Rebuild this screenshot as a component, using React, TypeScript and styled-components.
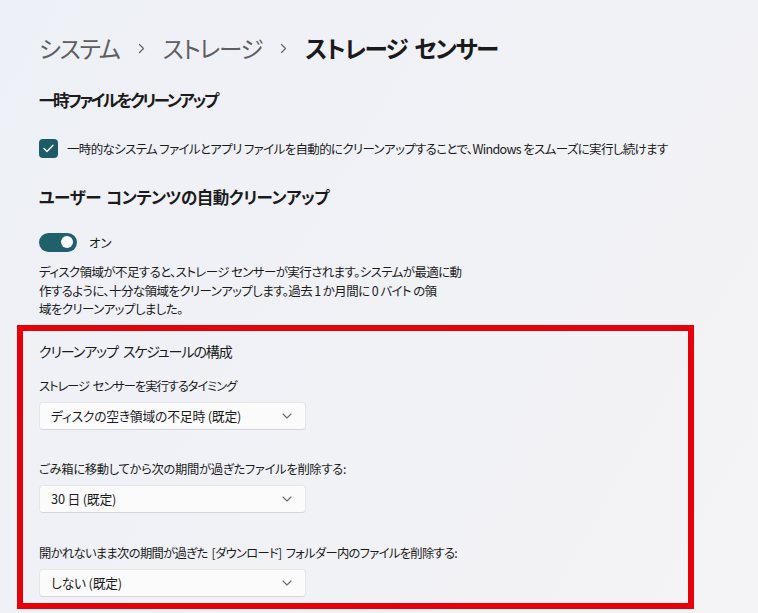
import * as React from 'react';
import styled, { createGlobalStyle } from 'styled-components';

const GlobalStyle = createGlobalStyle`
  html, body {
    margin: 0;
    padding: 0;
  }

  body {
    background: linear-gradient(120deg, #edf0f6 0%, #f1f2f6 55%, #f4f3f5 100%);
    font-family: "Noto Sans CJK JP", "Noto Sans", "Liberation Sans", sans-serif;
    font-feature-settings: "palt";
    color: #1b1b1b;
    min-height: 613px;
  }
`;

const Page = styled.div`
  width: 758px;
  height: 613px;
  box-sizing: border-box;
  padding: 30px 0 0 17px;
  overflow: hidden;
`;

const Section = styled.div`
  padding-left: 22px;
`;

const Breadcrumb = styled.div`
  display: flex;
  align-items: center;
  height: 36px;
  font-size: 23.5px;
  line-height: 36px;
  gap: 18px;
`;

const Crumb = styled.span<{ $current?: boolean }>`
  color: ${p => (p.$current ? '#1a1a1a' : '#5f5f5f')};
  font-weight: ${p => (p.$current ? 600 : 400)};
  letter-spacing: ${p => (p.$current ? '-1.4px' : '-1.2px')};
  word-spacing: 3px;
  white-space: nowrap;
`;

const Heading = styled.h2<{ $top: number; $spacing: number }>`
  margin: ${p => p.$top}px 0 0;
  font-size: 16.5px;
  line-height: 26px;
  font-weight: 600;
  letter-spacing: ${p => p.$spacing}px;
  word-spacing: 2px;
  white-space: nowrap;
`;

const CheckRow = styled.label`
  display: flex;
  align-items: center;
  gap: 9px;
  margin-top: 25px;
  height: 20px;
  font-size: 12.5px;
  letter-spacing: -0.65px;
  white-space: nowrap;
`;

const CheckBox = styled.span`
  width: 19px;
  height: 19px;
  border-radius: 4px;
  background: #1d5c67;
  display: flex;
  align-items: center;
  justify-content: center;
  flex: none;
`;

const ToggleRow = styled.div`
  display: flex;
  align-items: center;
  gap: 12px;
  margin-top: 22px;
  height: 20px;
  font-size: 12.5px;
`;

const Toggle = styled.span`
  width: 38px;
  height: 19px;
  border-radius: 10px;
  background: #1f606b;
  display: flex;
  align-items: center;
  justify-content: flex-end;
  padding-right: 4px;
  box-sizing: border-box;
  flex: none;
`;

const Knob = styled.span`
  width: 12px;
  height: 12px;
  border-radius: 50%;
  background: #ffffff;
`;

const Description = styled.p`
  margin: 11px 0 0;
  font-size: 12.5px;
  line-height: 18.5px;
  letter-spacing: -0.6px;
  white-space: nowrap;
`;

const ScheduleBox = styled.div`
  margin-top: 6px;
  width: 677px;
  height: 284px;
  box-sizing: border-box;
  border: 6px solid #e5000a;
  padding: 9px 16px 0 16px;
`;

const BoxTitle = styled.h3`
  margin: 0;
  font-size: 14px;
  line-height: 22px;
  font-weight: 400;
  letter-spacing: -1.1px;
  word-spacing: 3px;
  white-space: nowrap;
`;

const FieldLabel = styled.div<{ $top: number; $spacing: number }>`
  margin-top: ${p => p.$top}px;
  font-size: 12.3px;
  line-height: 18px;
  letter-spacing: ${p => p.$spacing}px;
  word-spacing: 2px;
  white-space: nowrap;
`;

const Select = styled.div`
  margin-top: 7px;
  width: 267px;
  height: 28px;
  box-sizing: border-box;
  display: flex;
  align-items: center;
  justify-content: space-between;
  padding: 0 13px 0 11px;
  background: #fbfbfc;
  border: 1px solid #e6e6e9;
  border-bottom-color: #d6d6da;
  border-radius: 4px;
  font-size: 12.8px;
  letter-spacing: -0.2px;
  color: #1b1b1b;
`;

const Chevron = ({ down }: { down?: boolean }) =>
  down ? (
    <svg width="10" height="6" viewBox="0 0 10 6">
      <path d="M1 1 L5 5 L9 1" fill="none" stroke="#6d6d6d" strokeWidth="1.1" strokeLinecap="round" strokeLinejoin="round" />
    </svg>
  ) : (
    <svg width="7" height="11" viewBox="0 0 7 11">
      <path d="M1.5 1.5 L5.5 5.5 L1.5 9.5" fill="none" stroke="#6a6a6a" strokeWidth="1.3" strokeLinecap="round" strokeLinejoin="round" />
    </svg>
  );

const Check = () => (
  <svg width="11" height="9" viewBox="0 0 11 9">
    <path d="M1 4.6 L4 7.4 L10 1.3" fill="none" stroke="#ffffff" strokeWidth="1.4" strokeLinecap="round" strokeLinejoin="round" />
  </svg>
);

const fields = [
  { label: 'ストレージ センサーを実行するタイミング', value: 'ディスクの空き領域の不足時 (既定)', top: 15, spacing: -1.05 },
  { label: 'ごみ箱に移動してから次の期間が過ぎたファイルを削除する:', value: '30 日 (既定)', top: 30, spacing: -0.3 },
  { label: '開かれないまま次の期間が過ぎた [ダウンロード] フォルダー内のファイルを削除する:', value: 'しない (既定)', top: 31, spacing: -0.68 },
];

export default function App() {
  return (
    <>
      <GlobalStyle />
      <Page>
        <Section>
          <Breadcrumb>
            <Crumb>システム</Crumb>
            <Chevron />
            <Crumb>ストレージ</Crumb>
            <Chevron />
            <Crumb $current>ストレージ センサー</Crumb>
          </Breadcrumb>
          <Heading $top={21} $spacing={-2.4}>一時ファイルをクリーンアップ</Heading>
          <CheckRow>
            <CheckBox>
              <Check />
            </CheckBox>
            一時的なシステム ファイルとアプリ ファイルを自動的にクリーンアップすることで、Windows をスムーズに実行し続けます
          </CheckRow>
          <Heading $top={26} $spacing={-0.5}>ユーザー コンテンツの自動クリーンアップ</Heading>
          <ToggleRow>
            <Toggle>
              <Knob />
            </Toggle>
            オン
          </ToggleRow>
          <Description>
            ディスク領域が不足すると、ストレージ センサーが実行されます。システムが最適に動
            <br />
            作するように、十分な領域をクリーンアップします。過去 1 か月間に 0 バイト の領
            <br />
            域をクリーンアップしました。
          </Description>
        </Section>
        <ScheduleBox>
          <BoxTitle>クリーンアップ スケジュールの構成</BoxTitle>
          {fields.map(f => (
            <React.Fragment key={f.label}>
              <FieldLabel $top={f.top} $spacing={f.spacing}>{f.label}</FieldLabel>
              <Select>
                <span>{f.value}</span>
                <Chevron down />
              </Select>
            </React.Fragment>
          ))}
        </ScheduleBox>
      </Page>
    </>
  );
}
